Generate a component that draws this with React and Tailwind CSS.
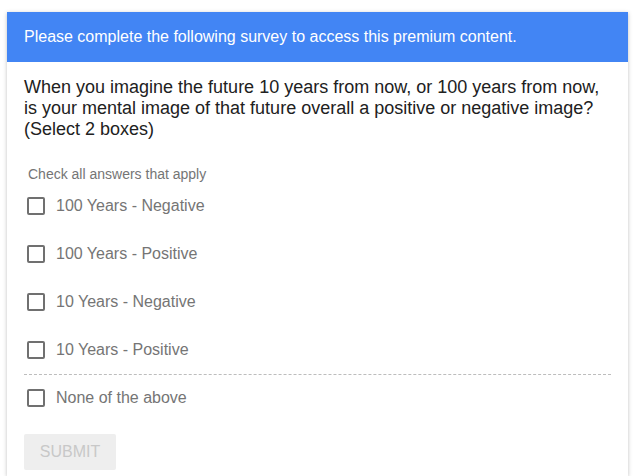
const options = [
  "100 Years - Negative",
  "100 Years - Positive",
  "10 Years - Negative",
  "10 Years - Positive",
];

function Box() {
  return (
    <span className="w-[18px] h-[18px] border-2 border-[#707070] rounded-[2px] shrink-0 bg-white" />
  );
}

export default function App() {
  return (
    <div
      className="bg-white min-h-[476px] pt-3 px-[7px]"
      style={{ fontFamily: '"Liberation Sans", Arial, sans-serif' }}
    >
      <div className="bg-white shadow-[0_1px_4px_rgba(0,0,0,0.25)] w-[621px]">
        <div className="bg-[#4285f4] text-white text-[16px] h-[50px] flex items-center px-[17px]">
          Please complete the following survey to access this premium content.
        </div>
        <div className="px-[17px] pt-[15px] pb-[6px]">
          <p className="text-[18px] leading-[21px] text-[#212121]">
            When you imagine the future 10 years from now, or 100 years from now,
            is your mental image of that future overall a positive or negative image?
            (Select 2 boxes)
          </p>
          <p className="mt-[26px] pl-1 text-[14px] leading-[16px] text-[#757575]">
            Check all answers that apply
          </p>
          <div>
            {options.map((o) => (
              <label key={o} className="flex items-center gap-[11px] h-[48px] pl-[3px] text-[16px] text-[#757575]">
                <Box />
                {o}
              </label>
            ))}
          </div>
          <div className="border-t border-dashed border-[#bdbdbd]" />
          <label className="flex items-center gap-[11px] h-[46px] pl-[3px] text-[16px] text-[#757575]">
            <Box />
            None of the above
          </label>
          <button className="mt-[13px] h-[36px] w-[92px] rounded-[2px] bg-[#eeeeee] text-[#c8c8c8] text-[16px]">
            SUBMIT
          </button>
        </div>
      </div>
    </div>
  );
}
